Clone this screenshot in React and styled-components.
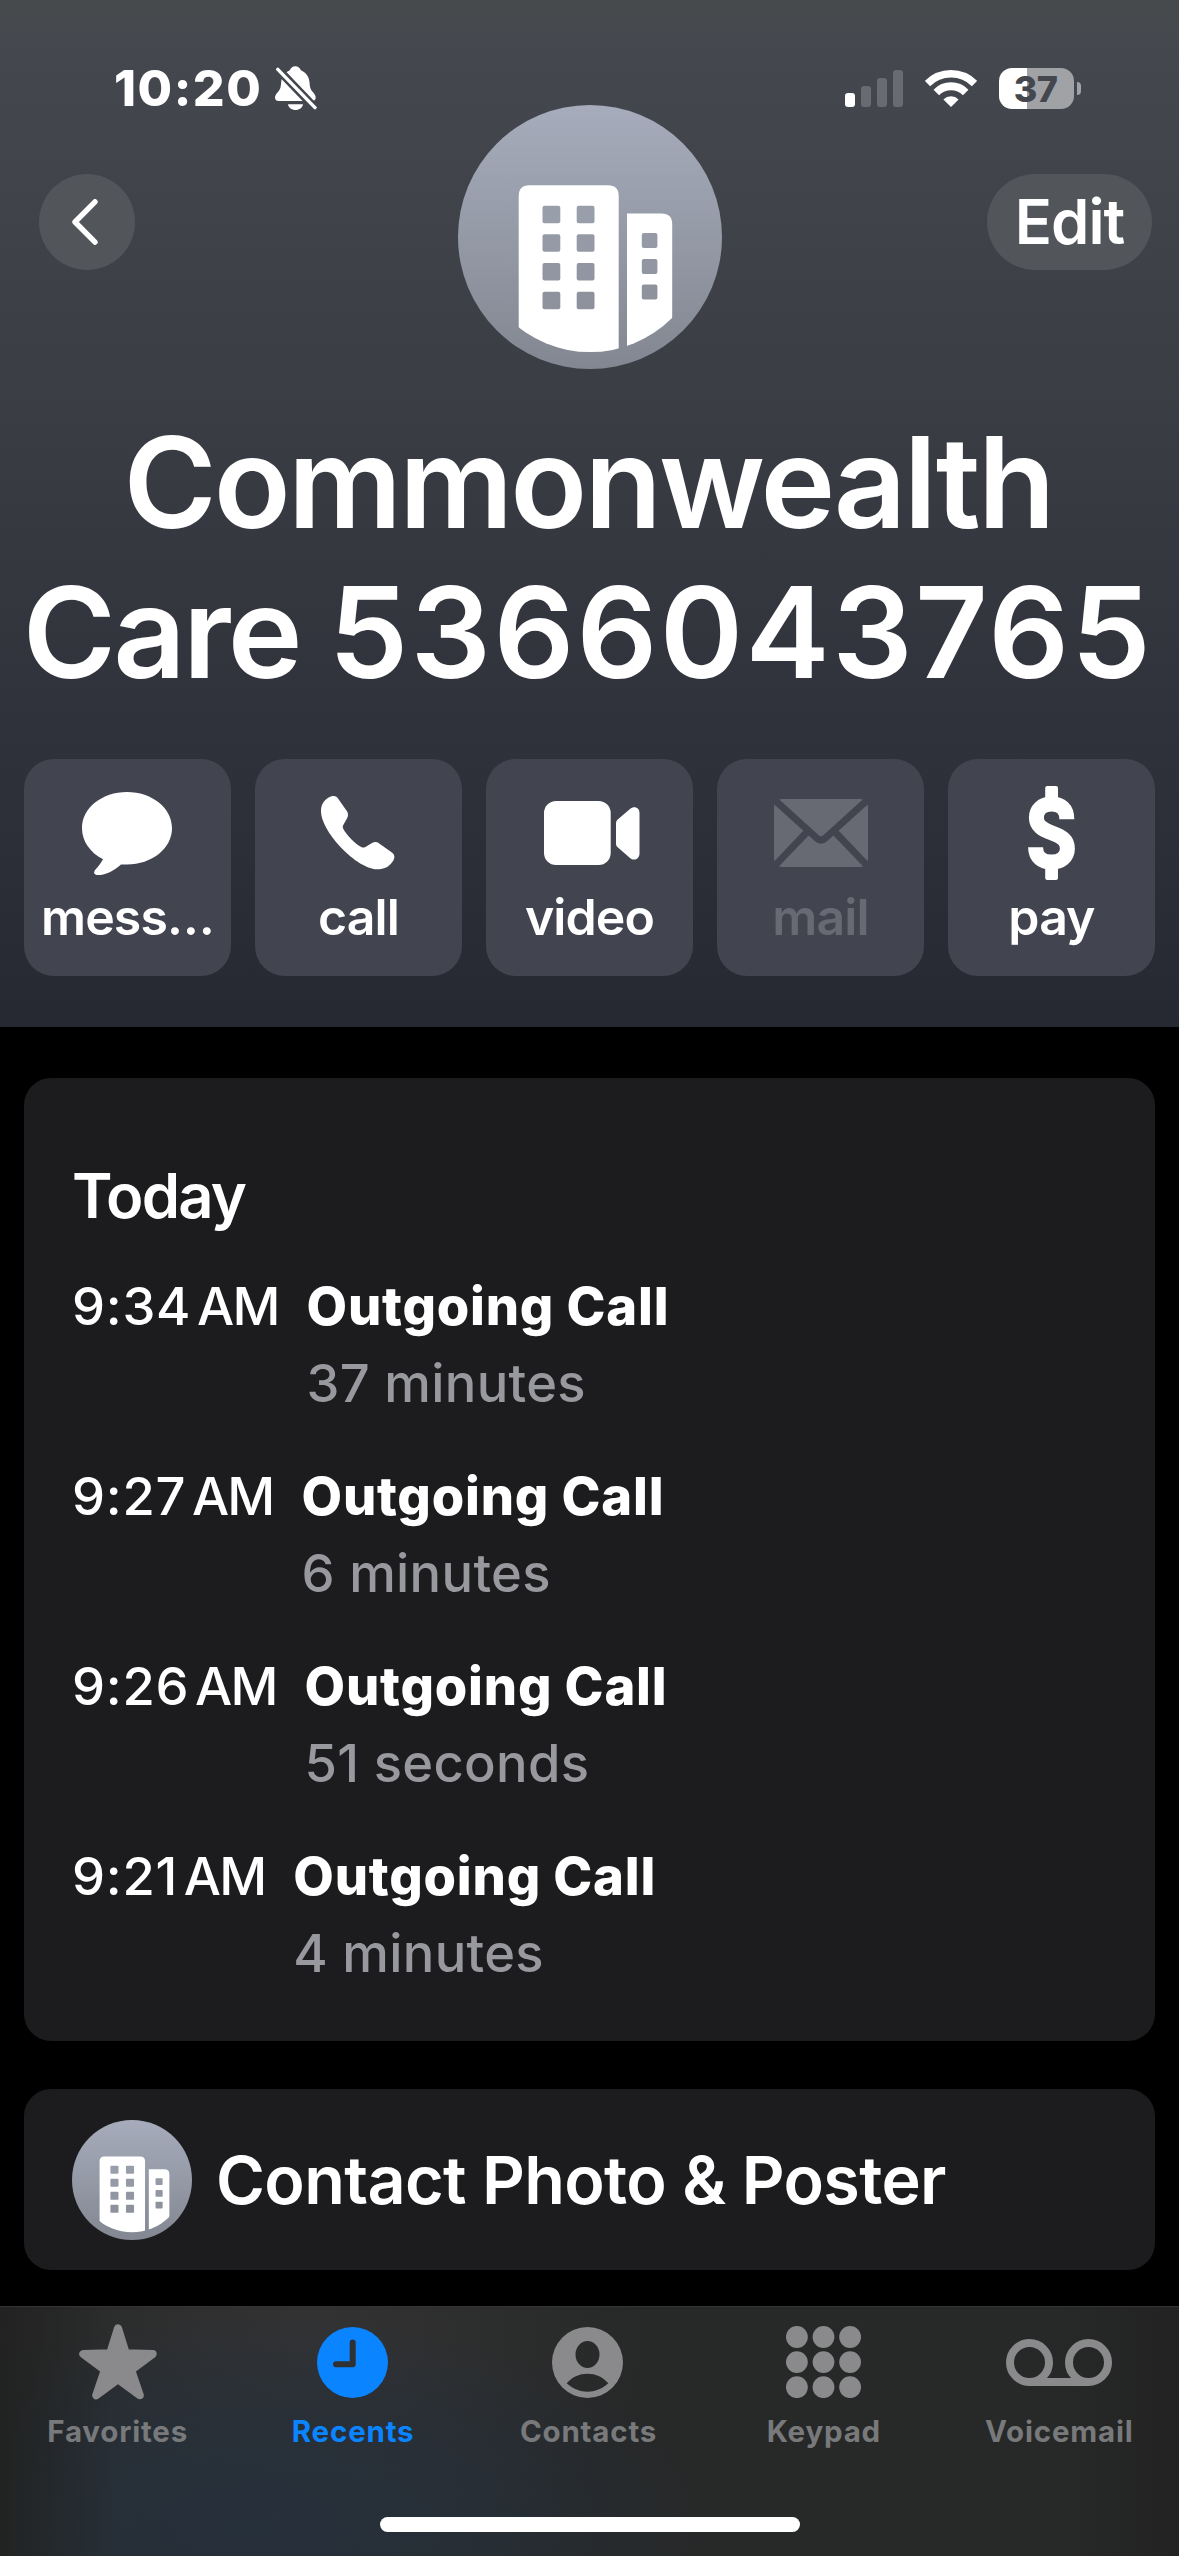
/**
 * App.jsx
 * Phone contact card: header with quick actions, today's call log,
 * contact photo row and the bottom tab bar
 */

import React from 'react';
import styled, { createGlobalStyle } from 'styled-components';

const colors = {
  card: '#1c1c1e',
  action: '#42444f',
  disabled: '#676a73',
  navButton: '#525559',
  secondary: '#98989f',
  tabIcon: '#8a8a8c',
  tabLabel: '#78797b',
  active: '#0a84ff',
};

const GlobalStyle = createGlobalStyle`
  * { box-sizing: border-box; }
  body {
    margin: 0;
    background: #000;
  }
`;

const Screen = styled.div`
  width: 1179px;
  height: 2556px;
  display: flex;
  flex-direction: column;
  overflow: hidden;
  background: #000;
  color: #fff;
  font-family: Inter, "Liberation Sans", sans-serif;
`;

/* ---------- header ---------- */

const Header = styled.header`
  height: 1027px;
  flex: none;
  background: linear-gradient(180deg, #474a4c 0, #44474e 60px, #3c3e46 370px, #31333c 700px, #262932 1027px);
`;

const StatusBar = styled.div`
  height: 105px;
  padding: 66px 98px 0 114px;
  display: flex;
  justify-content: space-between;
`;

const StatusGroup = styled.div`
  display: flex;
  align-items: center;
  height: 44px;
  gap: ${({ $gap }) => $gap}px;
`;

const Clock = styled.span`
  font-size: 50px;
  font-weight: 780;
  line-height: 44px;
  letter-spacing: 1.5px;
`;

const Battery = styled.div`
  display: flex;
  align-items: center;
  gap: 3px;
`;

const BatteryBody = styled.div`
  width: 75px;
  height: 41px;
  padding-right: 2px;
  border-radius: 13px;
  background: linear-gradient(90deg, #fff ${({ $level }) => $level}%, #a1a2a6 ${({ $level }) => $level}%);
  color: #44474e;
  font-size: 36px;
  font-weight: 800;
  line-height: 42px;
  text-align: center;
  letter-spacing: -0.6px;
`;

const BatteryCap = styled.div`
  width: 4px;
  height: 13px;
  border-radius: 0 4px 4px 0;
  background: #a1a2a6;
`;

const NavRow = styled.div`
  display: grid;
  grid-template-columns: 1fr 264px 1fr;
  padding: 0 27px 0 27px;
`;

const NavButton = styled.button`
  height: 96px;
  width: ${({ $width }) => $width}px;
  margin: 69px 0 0 ${({ $left }) => $left || 0}px;
  padding: 0 ${({ $nudge }) => $nudge || 0}px 0 0;
  border: 0;
  border-radius: 48px;
  background: ${colors.navButton};
  color: #fff;
  font: 580 61.5px/98px Inter, "Liberation Sans", sans-serif;
  letter-spacing: -1px;
  display: flex;
  align-items: center;
  justify-content: center;
  justify-self: ${({ $end }) => ($end ? 'end' : 'start')};
`;

const ContactName = styled.h1`
  margin: 38px 0 0;
  padding-right: 3px;
  font-size: 126.5px;
  font-weight: 630;
  line-height: 150px;
  letter-spacing: -2.8px;
  text-align: center;
  white-space: nowrap;
`;

const Digits = styled.span`
  letter-spacing: 2.3px;
`;

const Actions = styled.div`
  display: flex;
  gap: 24px;
  padding: 0 24px;
  margin-top: 52px;
`;

const ActionButton = styled.div`
  flex: 1;
  height: 217px;
  padding-top: 24px;
  border-radius: 30px;
  background: ${colors.action};
  color: ${({ $disabled }) => ($disabled ? colors.disabled : '#fff')};
  display: flex;
  flex-direction: column;
  align-items: center;
`;

const ActionIcon = styled.div`
  height: 100px;
  display: flex;
  align-items: center;
`;

const ActionLabel = styled.span`
  margin-top: 4px;
  font-size: 50px;
  font-weight: 580;
  line-height: 60px;
  letter-spacing: -0.9px;
`;

/* ---------- cards ---------- */

const CallCard = styled.section`
  height: 963px;
  flex: none;
  margin: 51px 24px 0;
  padding: 81px 48px 0;
  border-radius: 27px;
  background: ${colors.card};
`;

const DayTitle = styled.h2`
  margin: 0 0 35px;
  font-size: 61.5px;
  font-weight: 640;
  line-height: 74px;
  letter-spacing: -1.8px;
`;

const CallList = styled.div`
  display: flex;
  flex-direction: column;
  gap: 36px;
`;

const CallRow = styled.div`
  display: flex;
  align-items: flex-start;
  gap: 28px;
  font-size: 52.5px;
  line-height: 77px;
`;

const CallTime = styled.span`
  font-weight: 450;
  letter-spacing: 0.7px;
`;

const Meridiem = styled.span`
  margin-left: -4px;
  letter-spacing: -1.8px;
`;

const CallInfo = styled.div`
  display: flex;
  flex-direction: column;
`;

const CallType = styled.span`
  font-weight: 770;
  letter-spacing: 0.8px;
`;

const CallLength = styled.span`
  font-weight: 500;
  letter-spacing: 0.3px;
  color: ${colors.secondary};
`;

const PhotoCard = styled.section`
  height: 181px;
  flex: none;
  margin: 48px 24px 36px;
  padding: 0 48px;
  border-radius: 27px;
  background: ${colors.card};
  display: flex;
  align-items: center;
  gap: 24px;
  font-size: 66.5px;
  font-weight: 560;
  letter-spacing: -0.65px;
`;

/* ---------- tab bar ---------- */

const TabBar = styled.nav`
  height: 250px;
  flex: none;
  border-top: 1px solid #343434;
  background:
    linear-gradient(90deg, rgba(33, 34, 33, 0.9) 0, rgba(33, 34, 33, 0) 110px, rgba(33, 34, 33, 0) 1060px, rgba(33, 34, 33, 0.9) 1179px),
    radial-gradient(ellipse 460px 210px at 250px 220px, #26303b 0, rgba(38, 48, 59, 0.7) 50%, rgba(38, 48, 59, 0) 100%),
    radial-gradient(ellipse 330px 240px at 310px 30px, #333334 0, rgba(51, 51, 52, 0) 100%),
    #272828;
  display: flex;
  flex-direction: column;
  align-items: center;
`;

const Tabs = styled.div`
  width: 100%;
  padding-right: 2px;
  display: grid;
  grid-template-columns: repeat(5, 1fr);
`;

const Tab = styled.div`
  display: flex;
  flex-direction: column;
  align-items: center;
  padding-top: 15px;
  color: ${({ $active }) => ($active ? colors.active : colors.tabIcon)};
`;

const TabIcon = styled.div`
  height: 80px;
  display: flex;
  align-items: center;
`;

const TabLabel = styled.span`
  margin-top: 11px;
  font-size: 29.5px;
  font-weight: 650;
  line-height: 36px;
  letter-spacing: 0.8px;
  color: ${({ $active }) => ($active ? colors.active : colors.tabLabel)};
`;

const HomeIndicator = styled.div`
  width: 420px;
  height: 15px;
  margin-top: 68px;
  border-radius: 8px;
  background: #fff;
`;

/* ---------- icons ---------- */

const BellOffIcon = () => (
  <svg width="42" height="44" viewBox="0 0 42 44">
    <mask id="bellSlash">
      <rect width="42" height="44" fill="#fff" />
      <path d="M1 1.2 L42 44" stroke="#000" strokeWidth="8.4" />
    </mask>
    <g mask="url(#bellSlash)" fill="#fff">
      <path d="M20.3 .3c2.8 0 4.8 1.8 5.6 4c5 2.2 8.2 6.5 8.6 12c.4 5 1 7.5 3.5 10c2 2 2.7 4 2.7 5.5c0 2-1.5 3.3-4 3.3H4c-2.5 0-4-1.3-4-3.3c0-1.5.7-3.5 2.7-5.5c2.5-2.5 3.1-5 3.5-10c.4-5.5 3.6-9.8 8.6-12c.8-2.2 2.7-4 5.5-4z" />
    </g>
    <path d="M13 38.2H28C27.6 41.6 24.4 44 20.5 44S13.4 41.6 13 38.2z" fill="#fff" />
    <path d="M2.8 3.4 L40 41.6" stroke="#fff" strokeWidth="3.4" strokeLinecap="round" />
  </svg>
);

const SignalIcon = () => (
  <svg width="58" height="37" viewBox="0 0 58 37">
    <rect x="0" y="23" width="10" height="14" rx="3" fill="#fff" />
    <rect x="16" y="16" width="10" height="21" rx="3" fill="#696b70" />
    <rect x="32" y="8" width="10" height="29" rx="3" fill="#696b70" />
    <rect x="48" y="0" width="10" height="37" rx="3" fill="#696b70" />
  </svg>
);

const WifiIcon = () => (
  <svg width="52" height="37" viewBox="0 0 52 37" fill="none" stroke="#fff">
    <path d="M2.5 13.5A33.2 33.2 0 0 1 49.5 13.5" strokeWidth="7.5" />
    <path d="M11.3 22.4A20.7 20.7 0 0 1 40.7 22.4" strokeWidth="7.8" />
    <path d="M18.4 29.4A11 11 0 0 1 33.6 29.4L26 37z" fill="#fff" stroke="none" />
  </svg>
);

const BackIcon = () => (
  <svg width="26" height="46" viewBox="0 0 26 46">
    <path d="M23 2.8 L3 23 L23 43.2" fill="none" stroke="#fff" strokeWidth="5.4" strokeLinecap="round" strokeLinejoin="round" />
  </svg>
);

const windowShades = ['#999eab', '#959aa6', '#9196a2', '#8d929d'];

const BuildingAvatar = ({ size, id }) => (
  <svg width={size} height={size} viewBox="0 0 264 264">
    <defs>
      <linearGradient id={`${id}-bg`} x1="0" y1="0" x2="0" y2="1">
        <stop offset="0" stopColor="#a6acbb" />
        <stop offset="1" stopColor="#828791" />
      </linearGradient>
      <clipPath id={`${id}-clip`}>
        <circle cx="132" cy="131.5" r="115.6" />
      </clipPath>
    </defs>
    <circle cx="132" cy="132" r="132" fill={`url(#${id}-bg)`} />
    <g clipPath={`url(#${id}-clip)`} fill="#fff">
      <path d="M60.7 260V91q0-10.7 10.7-10.7h78.6q10.7 0 10.7 10.7V260z" />
      <path d="M169 260V108.6h34.5q10.7 0 10.7 10.7V260z" />
    </g>
    {[100.7, 129.2, 158, 186.7].map((y, i) => (
      <g key={y} fill={windowShades[i]}>
        <rect x="84.5" y={y} width="17.8" height="17.6" rx="2" />
        <rect x="118.7" y={y} width="17.8" height="17.6" rx="2" />
      </g>
    ))}
    {[128, 154, 179.6].map((y, i) => (
      <rect key={y} x="183.8" y={y} width="15.6" height="15" rx="2" fill={windowShades[i + 1]} />
    ))}
  </svg>
);

const MessageIcon = () => (
  <svg width="91" height="83" viewBox="0 0 91 83" fill="currentColor">
    <path d="M45 0C70 0 90 16 90 36.2S70 72.4 45 72.4H39C33 78 24 83 16 83C12 83 11 80.5 13.5 77.5C17 73.5 19.5 70 21 67.2C8 60.5 0 49 0 36.2C0 16 20 0 45 0z" />
  </svg>
);

const PhoneIcon = () => (
  <svg width="76" height="74" viewBox="0 0 76 74" fill="currentColor">
    <path d="M12.8 0C14.8 0 16 1 17.2 2.8L25.8 15C27.4 17.5 27.4 19.5 26.2 22L22.3 29C21.6 30.4 21.6 31.4 22.4 33C25 38.5 35 48.5 40.2 51C42 51.8 43 51.6 44.4 50.9L51 47C53.5 45.6 56 45.8 58.2 47.4L70.6 56.2C74.2 58.8 74.2 62 71.5 65.8C68 71 63 73.3 56.4 73.3C44 73.3 29 61 19 50.5C8 38.5 0 25 0 15.5C0 9 2.5 4.8 7.2 1.8C9 .6 11 0 12.8 0z" />
  </svg>
);

const VideoIcon = () => (
  <svg width="100" height="64" viewBox="-4 0 100 64" fill="currentColor">
    <rect width="66.7" height="64" rx="12" />
    <path d="M72 22Q72 20.2 73.4 18.8L86 8C90 4.5 95.5 6.5 95.5 12V52.5C95.5 58 90 60.5 86 57L73.4 46Q72 45 72 43z" />
  </svg>
);

const MailIcon = () => (
  <svg width="94" height="68" viewBox="0 0 94 68">
    <rect width="94" height="68" rx="8" fill="currentColor" />
    <g fill="none" stroke={colors.action} strokeWidth="7">
      <path d="M-1 -.5L42 38.5Q47 43.5 52 38.5L95 -.5" />
      <path d="M34 32L-1 68.5M60 32L95 68.5" />
    </g>
  </svg>
);

const PayIcon = () => (
  <svg width="47" height="94" viewBox="0 0 47 94">
    <path
      d="M38.8 33.2C38.8 23 33 18 23.5 18C14 18 8.4 24 8.4 31.5C8.4 39.5 14 43.4 24 47C34 50.6 39.4 54.5 39.4 62.5C39.4 71 33 76 23.5 76C14 76 7.6 71 7.6 61.2"
      fill="none" stroke="currentColor" strokeWidth="15"
    />
    <rect x="17.2" width="12.8" height="16" rx="2" fill="currentColor" />
    <rect x="17.2" y="78" width="12.8" height="16" rx="2" fill="currentColor" />
  </svg>
);

const StarIcon = () => (
  <svg width="78" height="76" viewBox="0 0 78 76">
    <path
      d="M39 4.3L46.8 29.3L73.7 30L52.2 46L60.8 71.3L39 55.3L17.2 71.3L25.8 46L4.3 30L31.2 29.3z"
      fill="currentColor" stroke="currentColor" strokeWidth="8" strokeLinejoin="round"
    />
  </svg>
);

const RecentsIcon = () => (
  <svg width="72" height="71" viewBox="0 0 72 71">
    <circle cx="35.5" cy="35.5" r="35.5" fill="currentColor" />
    <path d="M35.7 15.5V37.3H19" fill="none" stroke="#2f3133" strokeWidth="6" strokeLinecap="round" strokeLinejoin="round" />
  </svg>
);

const ContactsIcon = () => (
  <svg width="73" height="71" viewBox="0 0 73 71">
    <path
      fill="currentColor"
      fillRule="evenodd"
      d="M0 35.5a35.5 35.5 0 1 0 71 0a35.5 35.5 0 1 0-71 0zM23.5 27.5a12 13.4 0 1 1 24 0a12 13.4 0 1 1-24 0zM14.7 56.3C20 50 27 46.7 35.5 46.7S51 50 56.3 56.3C50 62 43 64.7 35.5 64.7S21 62 14.7 56.3z"
    />
  </svg>
);

const KeypadIcon = () => (
  <svg width="75" height="72" viewBox="0 0 75 72" fill="currentColor">
    {[11, 36.1, 61.2].map(y =>
      [10.9, 37.5, 64.1].map(x => <circle key={`${x}-${y}`} cx={x} cy={y} r="10.9" />)
    )}
  </svg>
);

const VoicemailIcon = () => (
  <svg width="106" height="47" viewBox="0 0 106 47" fill="none" stroke="currentColor" strokeWidth="8">
    <circle cx="23.5" cy="23.5" r="19.5" />
    <circle cx="82.5" cy="23.5" r="19.5" />
    <path d="M23.5 43H82.5" />
  </svg>
);

/* ---------- data ---------- */

const actions = [
  { label: 'mess…', icon: <MessageIcon /> },
  { label: 'call', icon: <PhoneIcon /> },
  { label: 'video', icon: <VideoIcon /> },
  { label: 'mail', icon: <MailIcon />, disabled: true },
  { label: 'pay', icon: <PayIcon /> },
];

const calls = [
  { time: '9:34', length: '37 minutes' },
  { time: '9:27', length: '6 minutes' },
  { time: '9:26', length: '51 seconds' },
  { time: '9:21', length: '4 minutes' },
];

const tabs = [
  { label: 'Favorites', icon: <StarIcon /> },
  { label: 'Recents', icon: <RecentsIcon />, active: true },
  { label: 'Contacts', icon: <ContactsIcon /> },
  { label: 'Keypad', icon: <KeypadIcon /> },
  { label: 'Voicemail', icon: <VoicemailIcon /> },
];

export default function App() {
  return (
    <Screen>
      <GlobalStyle />
      <Header>
        <StatusBar>
          <StatusGroup $gap={13}>
            <Clock>10:20</Clock>
            <BellOffIcon />
          </StatusGroup>
          <StatusGroup $gap={22}>
            <SignalIcon />
            <WifiIcon />
            <Battery>
              <BatteryBody $level={37}>37</BatteryBody>
              <BatteryCap />
            </Battery>
          </StatusGroup>
        </StatusBar>

        <NavRow>
          <NavButton $width={96} $left={12} $nudge={5}><BackIcon /></NavButton>
          <BuildingAvatar size={264} id="large" />
          <NavButton $width={165} $end>Edit</NavButton>
        </NavRow>

        <ContactName>
          Commonwealth<br />Care <Digits>5366043765</Digits>
        </ContactName>

        <Actions>
          {actions.map(({ label, icon, disabled }) => (
            <ActionButton key={label} $disabled={disabled}>
              <ActionIcon>{icon}</ActionIcon>
              <ActionLabel>{label}</ActionLabel>
            </ActionButton>
          ))}
        </Actions>
      </Header>

      <CallCard>
        <DayTitle>Today</DayTitle>
        <CallList>
          {calls.map(({ time, length }) => (
            <CallRow key={time}>
              <CallTime>
                {time}{'\u202f'}<Meridiem>AM</Meridiem>
              </CallTime>
              <CallInfo>
                <CallType>Outgoing Call</CallType>
                <CallLength>{length}</CallLength>
              </CallInfo>
            </CallRow>
          ))}
        </CallList>
      </CallCard>

      <PhotoCard>
        <BuildingAvatar size={120} id="small" />
        <span>Contact Photo &amp; Poster</span>
      </PhotoCard>

      <TabBar>
        <Tabs>
          {tabs.map(({ label, icon, active }) => (
            <Tab key={label} $active={active}>
              <TabIcon>{icon}</TabIcon>
              <TabLabel $active={active}>{label}</TabLabel>
            </Tab>
          ))}
        </Tabs>
        <HomeIndicator />
      </TabBar>
    </Screen>
  );
}
